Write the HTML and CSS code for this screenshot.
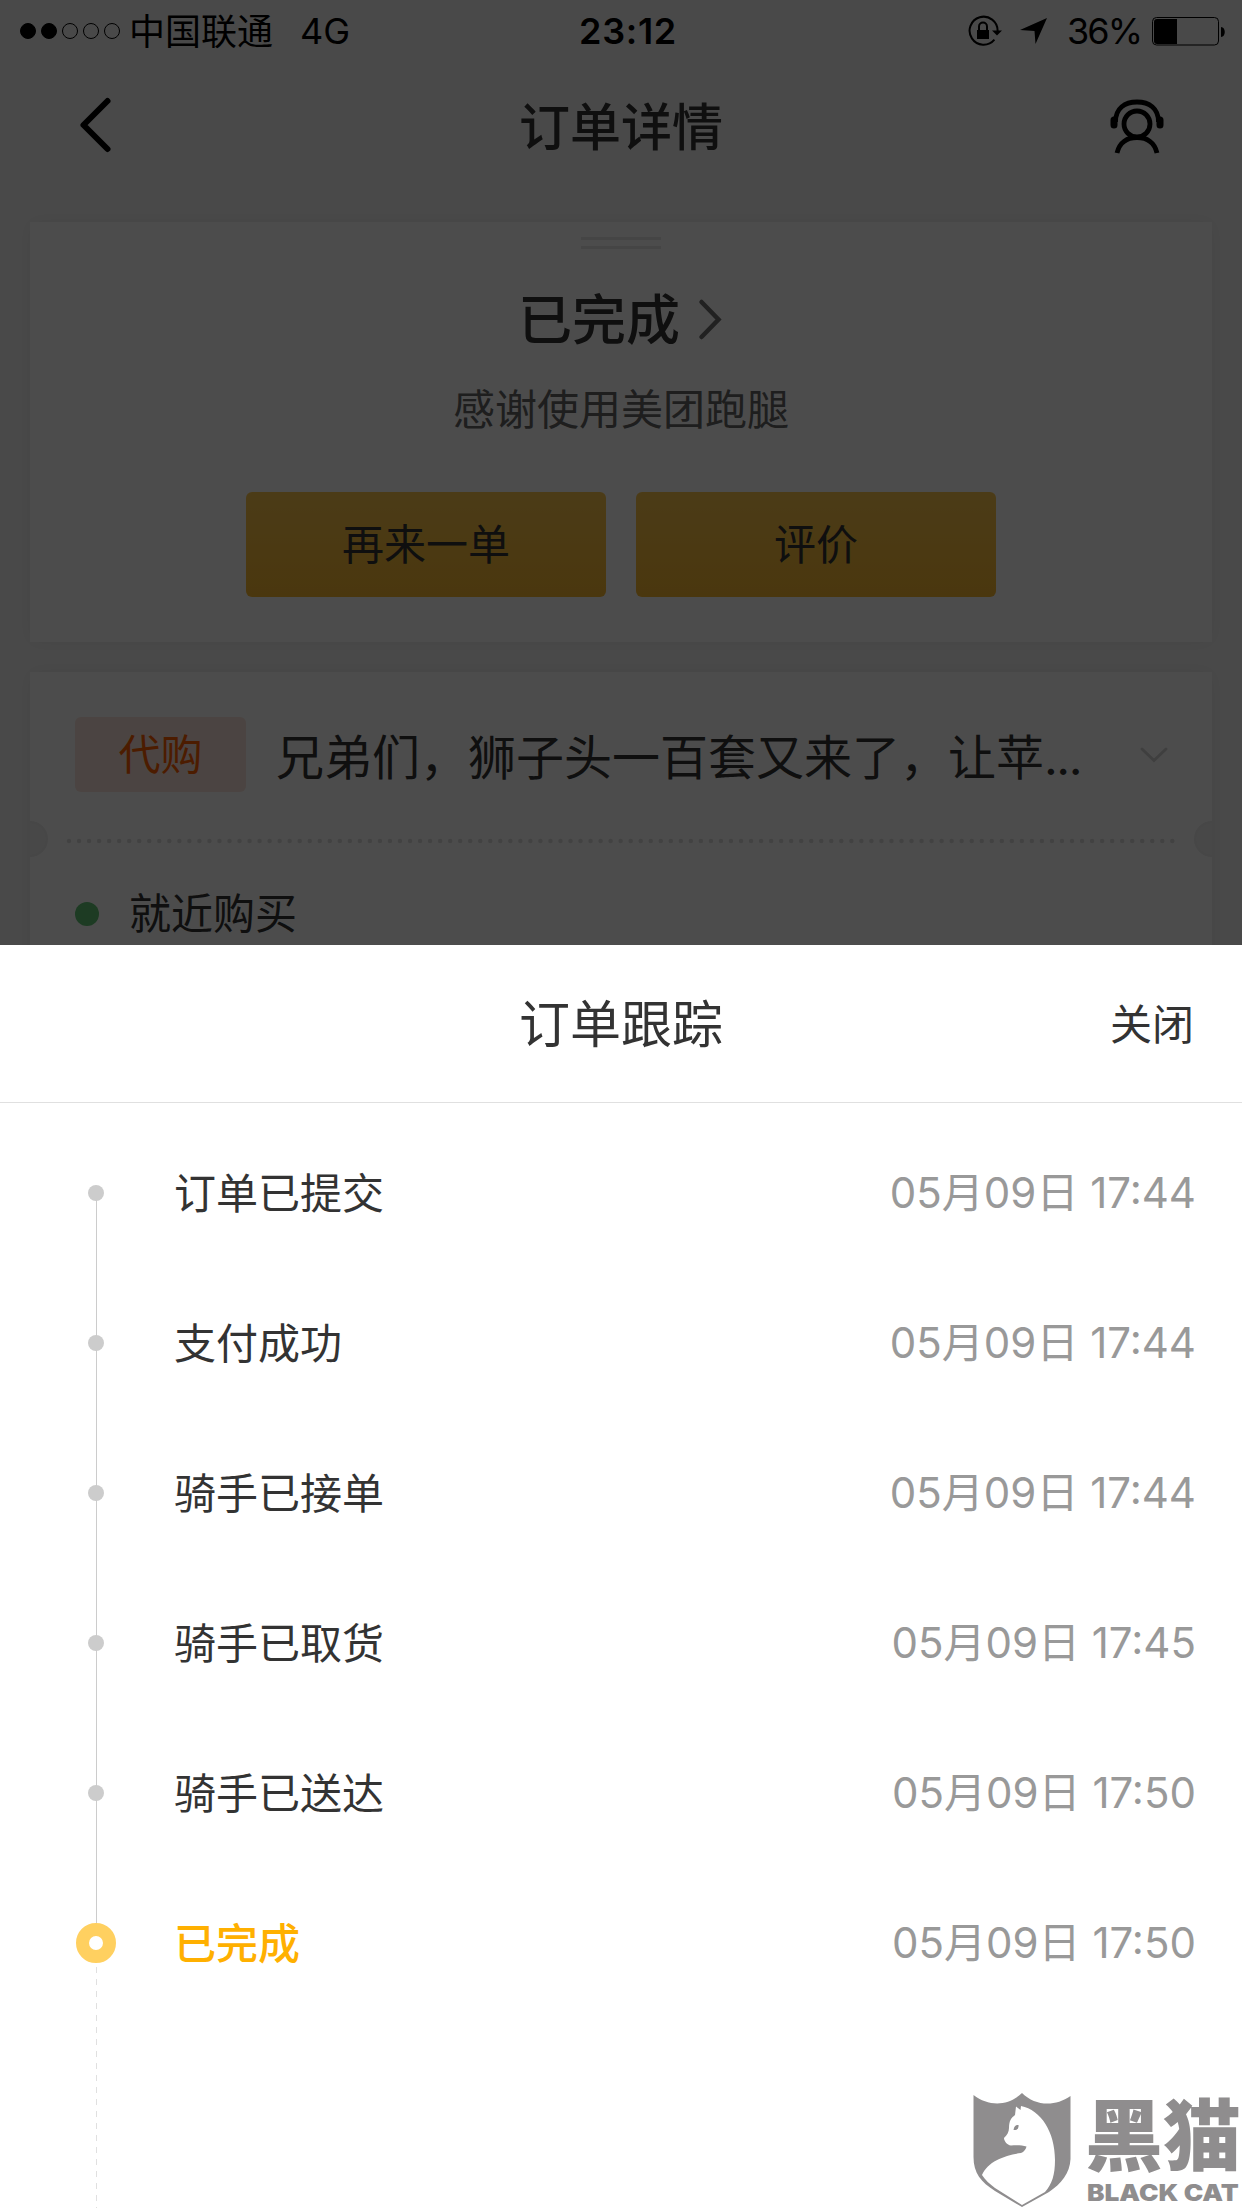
FILE: index.html
```
<!DOCTYPE html>
<html lang="zh-CN">
<head>
  <meta charset="UTF-8" />
  <meta name="viewport" content="width=device-width, initial-scale=1.0"/>
  <title>订单详情</title>
  <link rel="stylesheet" href="styles.css">
</head>
<body>

  <div class="page">
    <div class="status-bar">
      <div class="status-left">
        <div class="signal">
          <i class="on"></i><i class="on"></i><i></i><i></i><i></i>
        </div>
        <span class="carrier">中国联通</span>
        <span>4G</span>
      </div>
      <div class="clock">23:12</div>
      <div class="status-right">
        <svg class="lock-icon" width="36" height="32" viewBox="0 0 36 32">
          <path d="M30.6 16 A14 14 0 1 0 27.4 24.6" fill="none" stroke="#000" stroke-width="2"/>
          <path d="M25 15.5 H35 L30 20.5 Z"/>
          <rect x="10" y="15" width="12" height="9"/>
          <path d="M12 15 V11.500 a4 4 0 0 1 8 0 V15" fill="none" stroke="#000" stroke-width="2"/>
        </svg>
        <svg class="location-icon" width="28" height="28" viewBox="0 0 28 28">
          <path d="M0 13 L27 1 L15.500 27 L14.500 14 Z"/>
        </svg>
        <span class="percent">36%</span>
        <svg class="battery" width="74" height="30" viewBox="0 0 74 30">
          <rect x="0.500" y="1.500" width="66" height="27.500" rx="4" fill="none" stroke="#000"/>
          <path d="M5 3 H25 V28 H5 a3 3 0 0 1 -3 -3 V6 a3 3 0 0 1 3 -3 Z"/>
          <path d="M69 11 c5 0 5 10 0 10 Z"/>
        </svg>
      </div>
    </div>

    <div class="nav-bar">
      <svg width="40" height="60" viewBox="0 0 40 60">
        <path d="M32.500 5 L8.500 29 L32.500 53" fill="none" stroke="#000" stroke-width="6" stroke-linecap="round" stroke-linejoin="round"/>
      </svg>
      <h1>订单详情</h1>
      <svg width="56" height="56" viewBox="0 0 56 56" fill="none" stroke="#000" stroke-width="4.800">
        <circle cx="28" cy="26" r="13"/>
        <path d="M6.500 24 C6.500 10 16 4 28 4 S49.500 10 49.500 24"/>
        <path d="M8 55 C10.500 44 18.500 39.500 28 39.500 S45.500 44 48 55"/>
        <rect x="3.500" y="20.500" width="3" height="8" rx="1.500" stroke-width="4"/>
        <rect x="49.500" y="20.500" width="3" height="8" rx="1.500" stroke-width="4"/>
      </svg>
    </div>

    <div class="card state-card">
      <div class="handle"></div>
      <div class="state">
        <span>已完成</span>
        <svg width="26" height="44" viewBox="0 0 26 44">
          <path d="M3.500 5 L20.500 22.500 L3.500 40" fill="none" stroke="#707070" stroke-width="4.500" stroke-linecap="round"/>
        </svg>
      </div>
      <p class="thanks">感谢使用美团跑腿</p>
      <div class="buttons">
        <button>再来一单</button>
        <button>评价</button>
      </div>
    </div>

    <div class="card order-card">
      <div class="order-head">
        <span class="tag">代购</span>
        <span class="order-title">兄弟们，狮子头一百套又来了，让苹<span class="dots">...</span></span>
        <svg width="30" height="18" viewBox="0 0 30 18">
          <path d="M3 3 L15 14.500 L27 3" fill="none" stroke="#d4d4d4" stroke-width="3" stroke-linecap="round"/>
        </svg>
      </div>
      <div class="ticket-line">
        <svg width="1110" height="6" viewBox="0 0 1110 6">
          <path d="M3 3 H1110" stroke="#dedede" stroke-width="4.500" stroke-linecap="round" stroke-dasharray="0 10.030"/>
        </svg>
      </div>
      <div class="place">
        <i></i>
        <span>就近购买</span>
      </div>
    </div>
  </div>

  <div class="mask"></div>

  <div class="sheet">
    <div class="sheet-head">
      <h2>订单跟踪</h2>
      <a class="close">关闭</a>
    </div>
    <ul class="timeline">
      <li><i class="dot"></i><span class="step">订单已提交</span><span class="time">05月09日 17:44</span></li>
      <li><i class="dot"></i><span class="step">支付成功</span><span class="time">05月09日 17:44</span></li>
      <li><i class="dot"></i><span class="step">骑手已接单</span><span class="time">05月09日 17:44</span></li>
      <li><i class="dot"></i><span class="step">骑手已取货</span><span class="time">05月09日 17:45</span></li>
      <li><i class="dot"></i><span class="step">骑手已送达</span><span class="time">05月09日 17:50</span></li>
      <li class="active"><i class="dot"></i><span class="step">已完成</span><span class="time">05月09日 17:50</span></li>
    </ul>
    <div class="rest"></div>
  </div>

  <div class="watermark">
    <svg width="98" height="115" viewBox="0 0 98 115">
      <path fill="#8f8d8e" d="M0.500 2 C16 14 36 13 49 0 C62 13 82 14 97.500 3 V66 C97 80 88 91 76 99 L49 114 L22 98 C8 89 0.500 80 0.500 64 Z"/>
      <path fill="#fff" d="M42 22 L43 13.500 L47.500 17 L48 13 C68 17 82 39 82 67 C82 82 79 91 72 99 L49 112 L22 95 C17 91 12 87 9 82 C15 68 33 62 48 60 C51 59 53 56 53.500 53.500 C49 52 43 52 38 52.500 C34 52 31 48 31 45 C34 42 36 39 36 35 C36 28 38 25 42 22 Z"/>
      <path fill="#8f8d8e" d="M40.500 37 C41 33 43 31.500 45.500 32 C46 35 44 37.500 40.500 37 Z"/>
    </svg>
    <div class="brand">
      <span class="brand-cn">黑猫</span>
      <span class="brand-en">BLACK CAT</span>
    </div>
  </div>

</body>
</html>
```
FILE: styles.css
```
* {
  box-sizing: border-box;
}
body {
  margin: 0;
  width: 1242px;
  height: 2208px;
  overflow: hidden;
  position: relative;
  background: #f5f5f5;
  color: #333;
  font-family: Inter, "Noto Sans CJK SC", sans-serif;
  font-size: 42px;
  line-height: 60px;
}
h1, h2, p, ul {
  margin: 0;
  padding: 0;
}
svg {
  display: block;
  flex: none;
}
.page {
  height: 945px;
  overflow: hidden;
}

/* status bar */
.status-bar {
  height: 60px;
  display: grid;
  grid-template-columns: 1fr 120px 1fr;
  align-items: center;
  padding: 0 16px 0 20px;
  font-size: 36px;
  color: #000;
}
.status-left, .status-right, .signal {
  display: flex;
  align-items: center;
}
.signal {
  gap: 5px;
}
.signal i {
  width: 16px;
  height: 16px;
  border: 1px solid #000;
  border-radius: 50%;
}
.signal .on {
  background: #000;
}
.carrier {
  margin: 0 27px 0 9px;
  padding-top: 2px;
}
.clock {
  padding-left: 10px;
  font-weight: 600;
  letter-spacing: 0.7px;
  text-align: center;
}
.status-right {
  justify-content: flex-end;
}
.location-icon {
  margin: 0 19px 0 17px;
}
.percent {
  letter-spacing: -2px;
}
.battery {
  margin-left: 11px;
}

/* title bar */
.nav-bar {
  height: 132px;
  margin-bottom: 30px;
  padding: 0 77px 0 75px;
  display: flex;
  align-items: center;
}
.nav-bar h1 {
  flex: 1;
  padding: 3px 0 0 18px;
  text-align: center;
  font-size: 51px;
  font-weight: 500;
}

/* cards */
.card {
  position: relative;
  margin: 0 30px 30px;
  background: #fff;
  box-shadow: 0 0 18px rgba(0, 0, 0, 0.06);
}
.state-card {
  height: 420px;
  padding-top: 15px;
  display: flex;
  flex-direction: column;
  align-items: center;
}
.handle {
  width: 80px;
  height: 12px;
  border-top: 3px solid #e6e6e6;
  border-bottom: 3px solid #e6e6e6;
}
.state {
  height: 60px;
  display: flex;
  align-items: center;
  gap: 18px;
  margin: 40px 0 31px;
  font-size: 54px;
  font-weight: 500;
}
.state span {
  padding-top: 4px;
}
.thanks {
  color: #666;
}
.buttons {
  display: flex;
  gap: 30px;
  margin-top: 52px;
}
.buttons button {
  width: 360px;
  height: 105px;
  padding-top: 2px;
  border: none;
  border-radius: 6px;
  background: linear-gradient(#fcc74f, #f9b930);
  color: #333;
  font: inherit;
}
.order-card {
  height: 400px;
  padding-top: 45px;
}
.order-head {
  height: 75px;
  padding: 0 43px 0 45px;
  display: flex;
  align-items: center;
}
.tag {
  width: 171px;
  height: 75px;
  line-height: 75px;
  border-radius: 6px;
  text-align: center;
  background: #fae5dc;
  color: #ff6000;
}
.order-title {
  margin: 6px auto 0 30px;
  font-size: 48px;
}
.dots {
  letter-spacing: -1.500px;
}
.ticket-line {
  height: 36px;
  margin-top: 29px;
  display: flex;
  align-items: center;
  justify-content: space-between;
  overflow: hidden;
}
.ticket-line svg {
  margin-top: 4px;
}
/* round bites on both edges of the ticket */
.ticket-line::before, .ticket-line::after {
  content: "";
  width: 36px;
  height: 36px;
  flex: none;
  border-radius: 50%;
  background: #f1f1f1;
  box-shadow: inset 0 0 5px rgba(0, 0, 0, 0.04);
}
.ticket-line::before {
  margin-left: -18px;
}
.ticket-line::after {
  margin-right: -18px;
}
.place {
  display: flex;
  align-items: center;
  gap: 30px;
  margin-top: 27px;
  padding-left: 45px;
}
.place i {
  width: 24px;
  height: 24px;
  border-radius: 50%;
  background: #61c575;
}

.mask {
  position: absolute;
  top: 0;
  left: 0;
  width: 100%;
  height: 945px;
  background: rgba(0, 0, 0, 0.7);
}

/* tracking sheet */
.sheet {
  height: 1263px;
  background: #fff;
}
.sheet-head {
  height: 158px;
  padding: 3px 48px 0;
  border-bottom: 1px solid #e0e0e0;
  display: grid;
  grid-template-columns: 1fr auto 1fr;
  align-items: center;
}
.sheet-head h2 {
  grid-column: 2;
  font-size: 51px;
  font-weight: 400;
}
.close {
  text-align: right;
}
.timeline {
  list-style: none;
  padding-top: 15px;
}
.timeline li {
  position: relative;
  height: 150px;
  padding: 0 46px 0 88px;
  display: flex;
  align-items: center;
}
.dot {
  width: 16px;
  height: 16px;
  border-radius: 50%;
  background: #ccc;
  z-index: 1;
}
.step {
  margin-left: 70px;
  padding-top: 2px;
}
.time {
  margin-left: auto;
  color: #999;
}
/* line down to the next dot */
.timeline li:not(.active)::after {
  content: "";
  position: absolute;
  left: 96px;
  top: 75px;
  width: 1px;
  height: 150px;
  background: #ccc;
}
.active .dot {
  width: 40px;
  height: 40px;
  margin: 0 -12px;
  border: 13px solid #ffd060;
  background: #fff;
}
.active .step {
  color: #ffb000;
  font-weight: 500;
}
.rest {
  width: 1px;
  height: 241px;
  margin: -51px 0 0 96px;
  background: repeating-linear-gradient(#e0e0e0 0 6px, transparent 6px 12px);
}

.watermark {
  position: absolute;
  right: 2px;
  bottom: 0;
  display: flex;
  gap: 16px;
  color: #8f8d8e;
}
.brand {
  width: 153px;
  height: 115px;
  white-space: nowrap;
}
.brand-cn {
  display: block;
  margin-left: -2px;
  font-size: 78px;
  line-height: 88px;
  font-weight: 900;
}
.brand-en {
  display: block;
  font-size: 23px;
  line-height: 24px;
  font-weight: 900;
  transform: scaleX(1.14);
  transform-origin: left;
}
```
